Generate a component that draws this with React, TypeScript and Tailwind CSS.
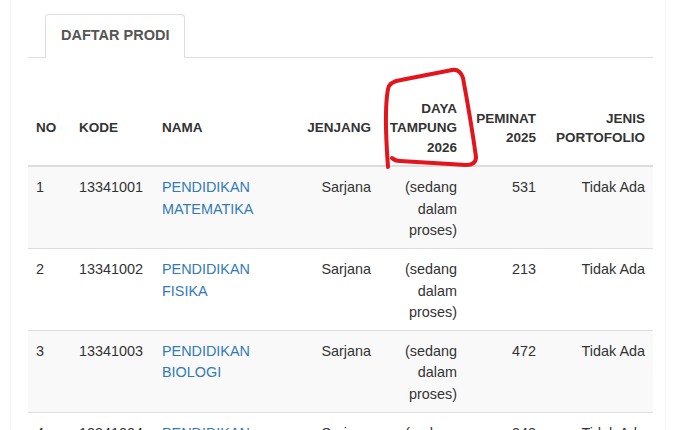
// Daftar Prodi: tab header + striped table of study programs, with a hand-drawn red annotation
const rows = [
  { no: 1, kode: '13341001', nama: ['PENDIDIKAN', 'MATEMATIKA'], jenjang: 'Sarjana', peminat: 531, porto: 'Tidak Ada' },
  { no: 2, kode: '13341002', nama: ['PENDIDIKAN', 'FISIKA'], jenjang: 'Sarjana', peminat: 213, porto: 'Tidak Ada' },
  { no: 3, kode: '13341003', nama: ['PENDIDIKAN', 'BIOLOGI'], jenjang: 'Sarjana', peminat: 472, porto: 'Tidak Ada' },
  { no: 4, kode: '13341004', nama: ['PENDIDIKAN', 'KIMIA'], jenjang: 'Sarjana', peminat: 348, porto: 'Tidak Ada' },
];

export default function App() {
  return (
    <div className="relative w-[680px] h-[430px] overflow-hidden bg-white text-[#333] font-['Liberation_Sans',Arial,sans-serif]">
      <div className="ml-[10px] w-[656px] min-h-[430px] border-x border-[#f4f4f4] pl-[17px] pt-[14px]">
        {/* Tabs */}
        <ul className="flex w-[625px] border-b border-[#ddd]">
          <li className="-mb-px ml-[17px]">
            <a className="block rounded-t border border-[#ddd] border-b-white bg-white px-[15px] pt-[10px] pb-[11px] text-[14.5px] font-bold leading-[21px] text-[#555]">
              DAFTAR PRODI
            </a>
          </li>
        </ul>

        {/* Table */}
        <table className="mt-[33px] w-[625px] table-fixed border-collapse">
          <colgroup>
            <col className="w-[43px]" />
            <col className="w-[83px]" />
            <col className="w-[144px]" />
            <col className="w-[81px]" />
            <col className="w-[86px]" />
            <col className="w-[79px]" />
            <col className="w-[109px]" />
          </colgroup>
          <thead>
            <tr className="text-[13.5px] font-bold leading-[19.4px] text-[#333]">
              <th className="border-b-2 border-[#ddd] p-2 text-left align-middle">NO</th>
              <th className="border-b-2 border-[#ddd] p-2 text-left align-middle">KODE</th>
              <th className="border-b-2 border-[#ddd] p-2 text-left align-middle">NAMA</th>
              <th className="border-b-2 border-[#ddd] p-2 text-right align-middle">JENJANG</th>
              <th className="border-b-2 border-[#ddd] p-2 text-right align-middle whitespace-nowrap">
                DAYA<br />TAMPUNG<br />2026
              </th>
              <th className="border-b-2 border-[#ddd] p-2 text-right align-middle whitespace-nowrap">
                PEMINAT<br />2025
              </th>
              <th className="border-b-2 border-[#ddd] p-2 text-right align-middle whitespace-nowrap">
                JENIS<br />PORTOFOLIO
              </th>
            </tr>
          </thead>
          <tbody>
            {rows.map((r, i) => (
              <tr key={r.no} className={`text-[14.4px] leading-[21.6px] ${i % 2 === 0 ? 'bg-[#f9f9f9]' : 'bg-white'}`}>
                <td className={`${i > 0 ? 'border-t' : ''} border-[#ddd] px-2 pt-[10px] pb-[6px] align-top`}>{r.no}</td>
                <td className={`${i > 0 ? 'border-t' : ''} border-[#ddd] px-2 pt-[10px] pb-[6px] align-top`}>{r.kode}</td>
                <td className={`${i > 0 ? 'border-t' : ''} border-[#ddd] px-2 pt-[10px] pb-[6px] align-top`}>
                  <a className="text-[#337ab7]">
                    {r.nama[0]}
                    <br />
                    {r.nama[1]}
                  </a>
                </td>
                <td className={`${i > 0 ? 'border-t' : ''} border-[#ddd] px-2 pt-[10px] pb-[6px] text-right align-top`}>{r.jenjang}</td>
                <td className={`${i > 0 ? 'border-t' : ''} border-[#ddd] px-2 pt-[10px] pb-[6px] text-right align-top`}>
                  (sedang<br />dalam<br />proses)
                </td>
                <td className={`${i > 0 ? 'border-t' : ''} border-[#ddd] px-2 pt-[10px] pb-[6px] text-right align-top`}>{r.peminat}</td>
                <td className={`${i > 0 ? 'border-t' : ''} border-[#ddd] px-2 pt-[10px] pb-[6px] text-right align-top`}>{r.porto}</td>
              </tr>
            ))}
          </tbody>
        </table>
      </div>

      {/* hand-drawn red circle around DAYA TAMPUNG 2026 */}
      <svg className="pointer-events-none absolute left-0 top-0" width="680" height="430" viewBox="0 0 680 430">
        <path
          d="M388,167 C386,140 385,105 388,89 C389,83 394,81 401,80 L452,70 C458,69 461,72 463,78 C468,105 473,135 476,157 C476,163 472,165 466,165 L400,161 C396,161 394,160 392,158"
          fill="none"
          stroke="#e3141c"
          strokeWidth="4"
          strokeLinecap="round"
          strokeLinejoin="round"
        />
      </svg>
    </div>
  );
}
